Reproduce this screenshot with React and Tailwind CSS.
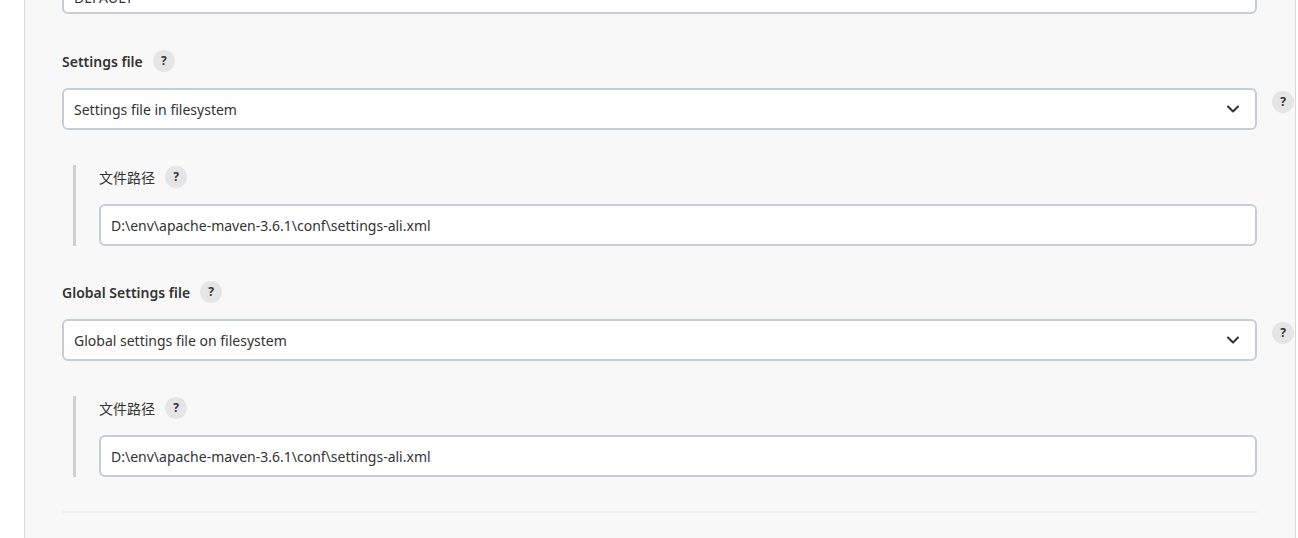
import { ChevronDown } from 'lucide-react';

function Help({ className = '' }) {
    return (
        <span
            className={`inline-flex h-[22px] w-[22px] shrink-0 items-center justify-center rounded-full bg-[#e5e5e5] text-[12px] font-bold text-[#333] ${className}`}
        >
            ?
        </span>
    );
}

function Label({ children, plain }) {
    return (
        <div
            className={`flex h-[22px] items-center gap-[10px] text-[14px] text-[#333] ${plain ? 'font-normal' : 'font-semibold'}`}
        >
            <span>{children}</span>
            <Help />
        </div>
    );
}

function Field({ value, className = '' }) {
    return (
        <div
            className={`flex h-[42px] items-center rounded-[6px] border-2 border-[#c5ced3] bg-white px-[10px] text-[14px] text-[#333] ${className}`}
        >
            {value}
        </div>
    );
}

function Select({ value }) {
    return (
        <div className="flex items-start gap-[15px]">
            <div className="flex h-[42px] w-[1195px] items-center justify-between rounded-[6px] border-2 border-[#c5ced3] bg-white pl-[10px] pr-[12px] text-[14px] text-[#333]">
                <span>{value}</span>
                <ChevronDown size={20} strokeWidth={2.5} className="text-[#333]" />
            </div>
            <Help className="mt-[3px]" />
        </div>
    );
}

function PathBlock() {
    return (
        <div className="ml-[11px] w-[1184px] border-l-[3px] border-[#cfcfcf] pl-[23px] pt-[1px]">
            <Label plain>文件路径</Label>
            <div className="mt-[16px]">
                <Field value="D:\env\apache-maven-3.6.1\conf\settings-ali.xml" />
            </div>
        </div>
    );
}

export default function App() {
    return (
        <div
            className="h-[538px] overflow-hidden bg-white"
            style={{ fontFamily: '"Noto Sans", "Noto Sans CJK SC", sans-serif' }}
        >
            <div className="ml-[24px] flex h-full w-[1272px] flex-col border-x border-[#d3d8db] bg-[#f8f8f8] pl-[37px]">
                <div className="-mt-[28px] w-[1195px] shrink-0">
                    <Field value="DEFAULT" className="pt-[8px]" />
                </div>

                <div className="mt-[36px]">
                    <Label>Settings file</Label>
                </div>
                <div className="mt-[16px]">
                    <Select value="Settings file in filesystem" />
                </div>
                <div className="mt-[35px]">
                    <PathBlock />
                </div>

                <div className="mt-[35px]">
                    <Label>Global Settings file</Label>
                </div>
                <div className="mt-[16px]">
                    <Select value="Global settings file on filesystem" />
                </div>
                <div className="mt-[35px]">
                    <PathBlock />
                </div>

                <div className="mt-[34px] h-[2px] w-[1195px] shrink-0 bg-[#efefef]" />
            </div>
        </div>
    );
}
